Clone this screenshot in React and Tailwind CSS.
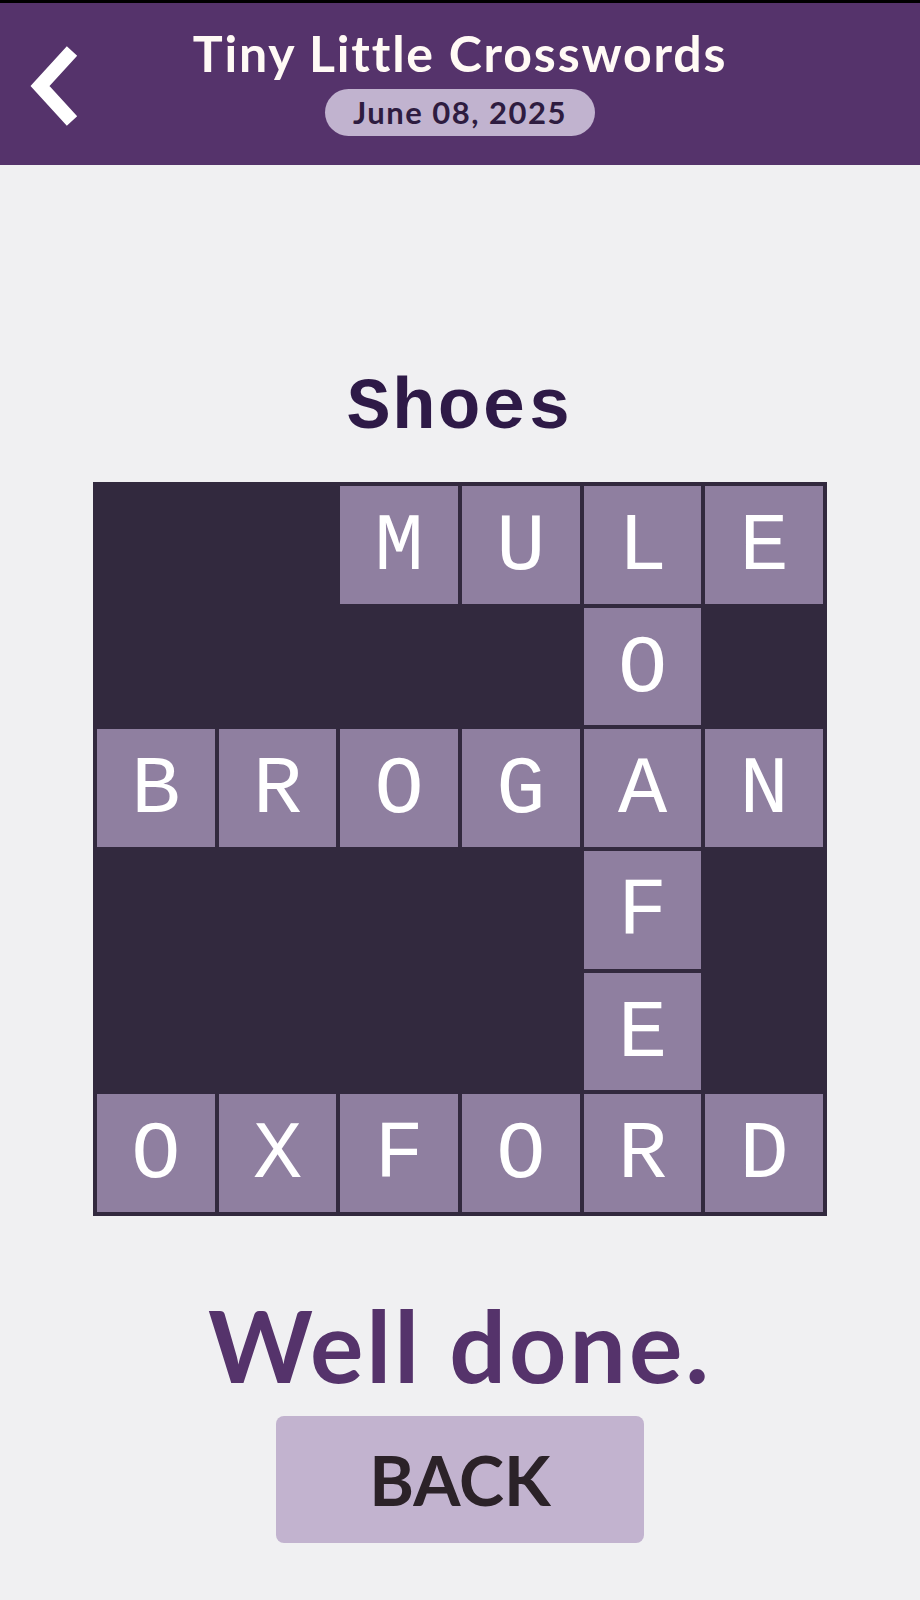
import React from 'react';

// solved board, "." marks a blocked square
const ROWS = [
  '..MULE',
  '....O.',
  'BROGAN',
  '....F.',
  '....E.',
  'OXFORD',
];

const BackChevron = () => (
  <svg width="60" height="90" viewBox="0 0 60 90" fill="none">
    <polyline
      points="48,10 16,45 48,80"
      stroke="#ffffff"
      strokeWidth="14"
      strokeLinecap="butt"
      strokeLinejoin="miter"
    />
  </svg>
);

const Cell = ({ ch }) =>
  ch === '.' ? (
    <div className="aspect-square" />
  ) : (
    <div className="aspect-square bg-[#8f7fa0] flex items-center justify-center pt-[6px] text-white text-[82px] leading-none font-['Liberation_Mono',monospace]">
      {ch}
    </div>
  );

export default function App() {
  return (
    <div className="min-h-[1600px] bg-[#f0f0f2] font-['Lato',sans-serif]">
      <header className="h-[165px] border-t-[3px] border-black bg-[#55336b] grid grid-cols-[1fr_auto_1fr]">
        <div className="pl-[24px] pt-[38px]">
          <BackChevron />
        </div>
        <div className="flex flex-col items-center pt-[25px]">
          <h1 className="text-[50px] leading-none font-bold tracking-[1.8px] text-[#fffaf5]">
            Tiny Little Crosswords
          </h1>
          <div className="mt-[11px] h-[47px] w-[270px] rounded-full bg-[#c1b3cf] flex items-center justify-center text-[31px] font-bold tracking-[1.5px] text-[#2e1c40]">
            June 08, 2025
          </div>
        </div>
        <div />
      </header>

      <main className="flex flex-col items-center">
        <h2 className="mt-[208px] text-[72px] leading-none font-bold tracking-[2px] text-[#2e1a47] font-['Liberation_Mono',monospace]">
          Shoes
        </h2>

        <div className="mt-[37px] w-[734px] bg-[#32293e] p-1 grid grid-cols-6 gap-1">
          {ROWS.map((row, r) =>
            row.split('').map((ch, c) => <Cell key={`${r}-${c}`} ch={ch} />)
          )}
        </div>

        <p className="mt-[78px] text-[100px] leading-none font-bold tracking-[3px] text-[#55336b]">
          Well done.
        </p>

        <button className="mt-[22px] w-[368px] h-[127px] rounded-lg bg-[#c2b3cf] text-[68px] font-bold text-[#2b2228]">
          BACK
        </button>
      </main>
    </div>
  );
}
